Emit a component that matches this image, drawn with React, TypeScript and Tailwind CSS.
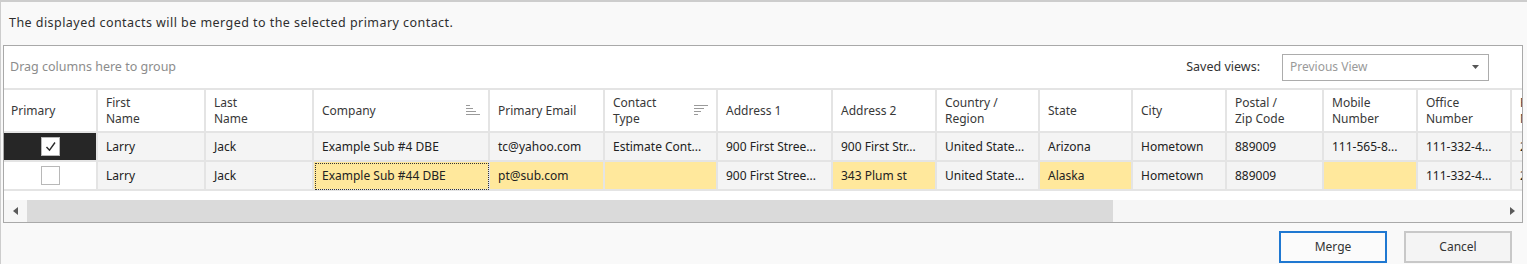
import clsx from 'clsx'

const cols = [
  { label: ['Primary'] },
  { label: ['First', 'Name'] },
  { label: ['Last', 'Name'] },
  { label: ['Company'], sort: 'asc' },
  { label: ['Primary Email'] },
  { label: ['Contact', 'Type'], sort: 'desc' },
  { label: ['Address 1'] },
  { label: ['Address 2'] },
  { label: ['Country /', 'Region'] },
  { label: ['State'] },
  { label: ['City'] },
  { label: ['Postal /', 'Zip Code'] },
  { label: ['Mobile', 'Number'] },
  { label: ['Office', 'Number'] },
  { label: ['Fax', 'Number'] },
]

// text, highlighted
const rows: { checked: boolean; cells: [string, boolean][] }[] = [
  {
    checked: true,
    cells: [
      ['Larry', false],
      ['Jack', false],
      ['Example Sub #4 DBE', false],
      ['tc@yahoo.com', false],
      ['Estimate Cont...', false],
      ['900 First Stree...', false],
      ['900 First Str...', false],
      ['United State...', false],
      ['Arizona', false],
      ['Hometown', false],
      ['889009', false],
      ['111-565-8...', false],
      ['111-332-4...', false],
      ['222-555-1...', false],
    ],
  },
  {
    checked: false,
    cells: [
      ['Larry', false],
      ['Jack', false],
      ['Example Sub #44 DBE', true],
      ['pt@sub.com', true],
      ['', true],
      ['900 First Stree...', false],
      ['343 Plum st', true],
      ['United State...', false],
      ['Alaska', true],
      ['Hometown', false],
      ['889009', false],
      ['', true],
      ['111-332-4...', false],
      ['222-555-1...', false],
    ],
  },
]

function SortIcon({ dir }: { dir: string }) {
  const widths = dir === 'asc' ? [4, 7, 10, 14] : [14, 10, 7, 4]
  return (
    <svg width="14" height="11" viewBox="0 0 14 11" className="shrink-0">
      {widths.map((w, i) => (
        <rect key={i} x="0" y={i * 3} width={w} height="1" fill="#9a9a9a" />
      ))}
    </svg>
  )
}

function Checkbox({ checked }: { checked: boolean }) {
  return (
    <div className="w-[19px] h-[19px] bg-white border border-[#b8b8b8] flex items-center justify-center">
      {checked && (
        <svg width="13" height="13" viewBox="0 0 13 13">
          <path d="M2.5 7l3 3.2L11 2.5" fill="none" stroke="#2a2a2a" strokeWidth="1.4" />
        </svg>
      )}
    </div>
  )
}

const cellBase = 'flex items-center px-2 border-r-2 border-b-2 border-[#e4e4e4] whitespace-nowrap overflow-hidden'

export default function App() {
  return (
    <div className="w-[1527px] h-[264px] overflow-hidden bg-[#f9f9f9] border-t-2 border-l border-[#cdcdcd] flex flex-col font-['Noto_Sans',sans-serif] text-[12px] text-[#2e2e2e]">
      {/* Message */}
      <div className="h-[43px] shrink-0 flex items-center pl-[8px] text-[12.5px] tracking-[0.45px]">
        The displayed contacts will be merged to the selected primary contact.
      </div>

      {/* Grid panel */}
      <div className="ml-[2px] mr-[4px] h-[178px] shrink-0 border border-[#a9a9a9] bg-white flex flex-col">
        {/* Group panel */}
        <div className="h-[42px] shrink-0 flex items-center justify-between pl-[6px] pr-[33px]">
          <span className="text-[#8c8c8c] text-[12.5px]">Drag columns here to group</span>
          <div className="flex items-center gap-[22px]">
            <span className="text-[#333] text-[12.5px]">Saved views:</span>
            <div className="w-[207px] h-[27px] border border-[#acacac] bg-white flex items-center justify-between pl-[7px] pr-[9px]">
              <span className="text-[#9a9a9a]">Previous View</span>
              <svg width="7" height="4" viewBox="0 0 7 4">
                <path d="M0 0h7L3.5 4z" fill="#555" />
              </svg>
            </div>
          </div>
        </div>

        {/* Table */}
        <div className="overflow-hidden">
          <div className="grid grid-cols-[94px_108px_108px_176px_115px_113px_115px_104px_103px_93px_94px_97px_94px_94px_100px] w-max">
            {cols.map((c, i) => (
              <div
                key={i}
                className={clsx(
                  cellBase,
                  'h-[45px] border-t-2 bg-white text-[#383838] leading-[16px] justify-between',
                  i === 0 && 'pl-[7px]'
                )}
              >
                <div>
                  {c.label.map((l, j) => (
                    <div key={j}>{l}</div>
                  ))}
                </div>
                {c.sort && <SortIcon dir={c.sort} />}
              </div>
            ))}

            {rows.map((r, ri) => (
              <div key={ri} className="contents">
                <div
                  className={clsx(
                    cellBase,
                    'h-[29px] justify-center',
                    r.checked ? 'bg-[#262626] border-[#262626]' : 'bg-white'
                  )}
                >
                  <Checkbox checked={r.checked} />
                </div>
                {r.cells.map(([t, hl], ci) => (
                  <div
                    key={ci}
                    className={clsx(
                      cellBase,
                      'h-[29px] text-[#222]',
                      hl ? 'bg-[#ffe89c]' : 'bg-[#f4f4f4]',
                      ri === 1 && ci === 2 && 'outline-1 outline-dotted outline-[#333] -outline-offset-2'
                    )}
                  >
                    {t}
                  </div>
                ))}
              </div>
            ))}
          </div>
        </div>

        <div className="h-[9px] shrink-0 bg-white" />

        {/* Horizontal scrollbar */}
        <div className="h-[22px] shrink-0 flex bg-[#f6f6f6]">
          <div className="w-[23px] flex items-center justify-center">
            <svg width="5" height="8" viewBox="0 0 5 8">
              <path d="M5 0v8L0 4z" fill="#5a5a5a" />
            </svg>
          </div>
          <div className="w-[1086px] bg-[#dadada]" />
          <div className="flex-1" />
          <div className="w-[20px] flex items-center justify-center">
            <svg width="5" height="8" viewBox="0 0 5 8">
              <path d="M0 0v8L5 4z" fill="#5a5a5a" />
            </svg>
          </div>
        </div>
      </div>

      {/* Buttons */}
      <div className="flex-1 flex justify-end items-start gap-[17px] pt-[8px] pr-[15px]">
        <button className="w-[108px] h-[32px] border-2 border-[#1f78d1] bg-[#fbfbfb] text-[#333]">Merge</button>
        <button className="w-[108px] h-[32px] border-2 border-[#c8c8c8] bg-[#f4f4f4] text-[#333]">Cancel</button>
      </div>
    </div>
  )
}
